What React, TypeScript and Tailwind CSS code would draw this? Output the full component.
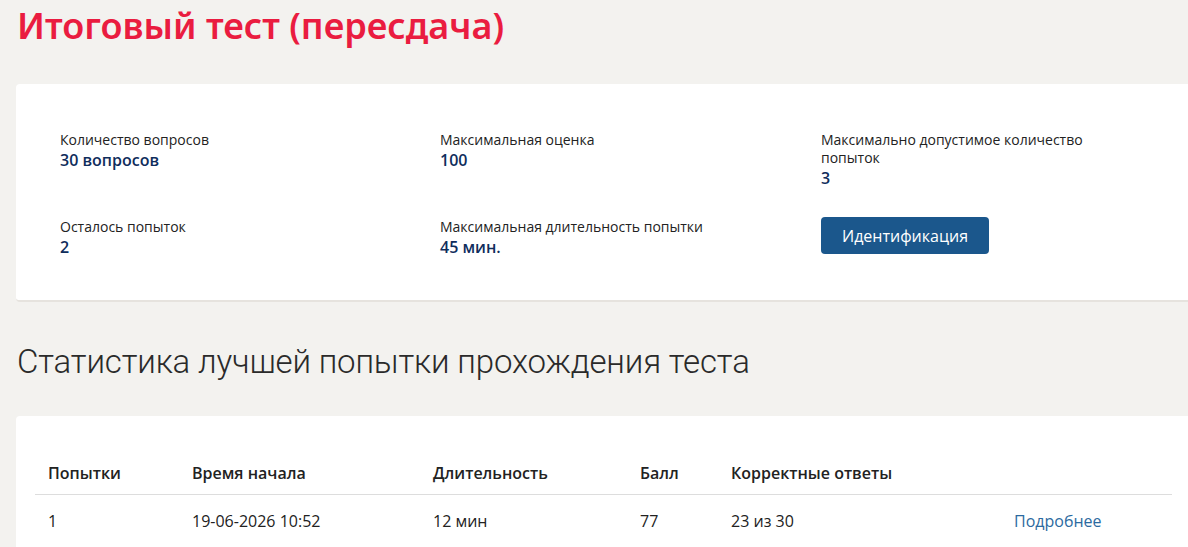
const stats = [
  { label: 'Количество вопросов', value: '30 вопросов' },
  { label: 'Максимальная оценка', value: '100' },
  { label: 'Максимально допустимое количество попыток', value: '3' },
  { label: 'Осталось попыток', value: '2' },
  { label: 'Максимальная длительность попытки', value: '45 мин.' },
]

const attempts = [
  { n: '1', start: '19-06-2026 10:52', duration: '12 мин', score: '77', correct: '23 из 30' },
]

function Stat({ label, value }: { label: string; value: string }) {
  return (
    <div className="w-[300px]">
      <div className="text-[14px] leading-[18px] text-[#222]">{label}</div>
      <div className="text-[16px] leading-[22px] font-semibold text-[#0f2d5c]">{value}</div>
    </div>
  )
}

export default function App() {
  return (
    <div className="w-full min-h-[547px] overflow-hidden bg-[#f3f2ef] font-['Open_Sans',sans-serif]">
      <div className="w-[1220px] pl-4">
        <h1 className="pt-[4px] pl-[1px] text-[36px] leading-[44px] font-semibold text-[#ea1c40] font-['Noto_Sans',sans-serif]">
          Итоговый тест (пересдача)
        </h1>

        <div className="mt-[36px] h-[218px] rounded-[4px] bg-white border-b-2 border-[#e6e3de] pl-[44px] pt-[47px]">
          <div className="grid grid-cols-[380px_381px_300px] gap-y-[29px]">
            <Stat {...stats[0]} />
            <Stat {...stats[1]} />
            <Stat {...stats[2]} />
            <Stat {...stats[3]} />
            <Stat {...stats[4]} />
            <div>
              <button className="-mt-[1px] h-[37px] w-[168px] rounded-[4px] bg-[#1b578c] text-[16px] text-white">
                Идентификация
              </button>
            </div>
          </div>
        </div>

        <h2 className="mt-[40px] pl-[1px] text-[33px] leading-[40px] font-light tracking-[-0.15px] text-[#2a2a2a] font-['Roboto',sans-serif]">
          Статистика лучшей попытки прохождения теста
        </h2>

        <div className="mt-[34px] rounded-[4px] bg-white pl-[19px] pt-[45px] pb-6">
          <table className="w-[1137px] text-left text-[16px] text-[#222]">
            <thead>
              <tr className="border-b border-[#dddddd]">
                <th className="w-[157px] pl-[13px] pb-[9px] font-semibold">Попытки</th>
                <th className="w-[241px] pb-[9px] font-semibold">Время начала</th>
                <th className="w-[207px] pb-[9px] font-semibold">Длительность</th>
                <th className="w-[91px] pb-[9px] font-semibold">Балл</th>
                <th className="w-[283px] pb-[9px] font-semibold">Корректные ответы</th>
                <th className="pb-[9px]"></th>
              </tr>
            </thead>
            <tbody>
              {attempts.map((a) => (
                <tr key={a.n}>
                  <td className="pl-[13px] pt-[14px]">{a.n}</td>
                  <td className="pt-[14px]">{a.start}</td>
                  <td className="pt-[14px]">{a.duration}</td>
                  <td className="pt-[14px]">{a.score}</td>
                  <td className="pt-[14px]">{a.correct}</td>
                  <td className="pt-[14px]">
                    <a href="#" className="text-[#2c6aa0]">Подробнее</a>
                  </td>
                </tr>
              ))}
            </tbody>
          </table>
        </div>
      </div>
    </div>
  )
}
